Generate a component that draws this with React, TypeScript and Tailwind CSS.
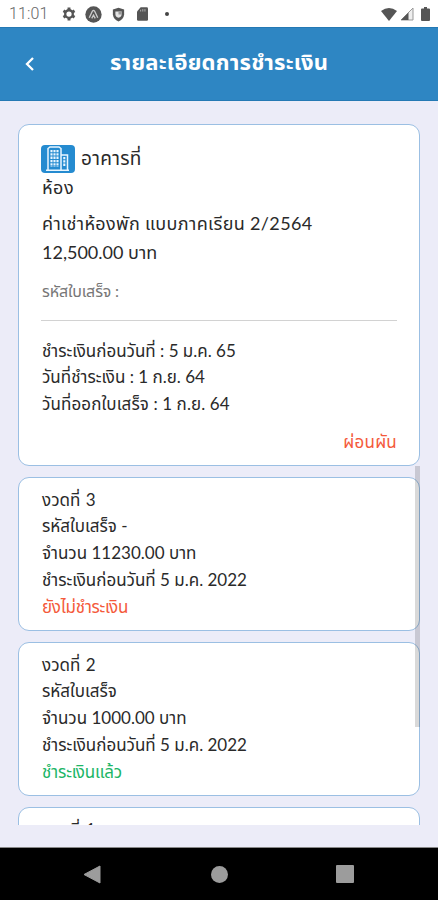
import type { ReactNode } from "react";

function Line({ children, className = "" }: { children: ReactNode; className?: string }) {
  return (
    <p className="flex h-[26.75px] items-center whitespace-nowrap">
      <span className={className}>{children}</span>
    </p>
  );
}

function StatusBar() {
  return (
    <div className="flex h-[27px] shrink-0 items-center bg-white pt-[1px] text-[#555]">
      <span className="ml-[9px] w-[53px] font-['Roboto',sans-serif] text-[16px] font-light tracking-[0.1px] text-[#666]">11:01</span>
      <svg width="14" height="14" viewBox="0 0 24 24" fill="none" stroke="currentColor">
        <circle cx="12" cy="12" r="6.5" strokeWidth="4" />
        <path d="M12 1v4M12 19v4M2.5 6.5l3.4 2M18.1 15.5l3.4 2M2.5 17.5l3.4-2M18.1 8.5l3.4-2" strokeWidth="5" />
      </svg>
      <svg className="ml-[9px]" width="17" height="17" viewBox="0 0 24 24">
        <circle cx="12" cy="12" r="11.5" fill="currentColor" />
        <path d="M6 16.5 10.3 7.5Q12 5 13.7 7.5L18 16.5M9.5 17.5l2.5-4.5 2.5 4.5" fill="none" stroke="#ccc" strokeWidth="1.9" />
      </svg>
      <svg className="ml-[10px]" width="13" height="15" viewBox="0 0 20 24">
        <path d="M10 1 1 4v8q1 8 9 11 8-3 9-11V4Z" fill="currentColor" />
        <path d="M5 7h10v4q0 5-5 6-5-1-5-6Z" fill="#e4e4e4" />
        <path d="M10 7h5v5h-5Z" fill="#999" />
      </svg>
      <svg className="ml-[12px]" width="11" height="14" viewBox="0 0 18 22">
        <path d="M6 0h10q2 0 2 2v18q0 2-2 2H2q-2 0-2-2V7Z" fill="currentColor" />
        <path d="M6 4v3M9.5 3v4M13 3v4" stroke="#bbb" strokeWidth="1.4" />
      </svg>
      <span className="ml-[17px] size-[4px] rounded-full bg-[#444]" />
      <svg className="ml-auto" width="16" height="13" viewBox="0 0 16 13">
        <path d="M0 3Q8-3 16 3L8 13Z" fill="currentColor" />
      </svg>
      <svg className="ml-[3px]" width="14" height="14" viewBox="0 0 14 14">
        <path d="M13 1v12H1Z" fill="#eee" stroke="#999" />
        <path d="M8.5 5.5V13H1Z" fill="currentColor" />
      </svg>
      <svg className="mr-[8px] ml-[7px]" width="9" height="14" viewBox="0 0 9 14">
        <path d="M3 0h3v1.5h2q1 0 1 1V13q0 1-1 1H1q-1 0-1-1V2.5q0-1 1-1h2Z" fill="currentColor" />
      </svg>
    </div>
  );
}

function Building() {
  return (
    <svg className="shrink-0" width="34" height="28" viewBox="0 0 34 28">
      <rect width="34" height="28" rx="4" fill="#258bd0" />
      <path d="M7 25V3.5L9 2h9l2 1.5V25M20 10h6.5V25M5 25.2h23" fill="none" stroke="#e9f6ff" strokeWidth="1.5" />
      <path d="M10.5 5v17M13.5 5v17M16.5 5v17M23.3 12v10" stroke="#e9f6ff" strokeWidth="2.1" strokeDasharray="2.3 1" />
    </svg>
  );
}

const card = "shrink-0 rounded-[11px] border-[1.5px] border-[#9bbfe3] bg-white pr-[22px] pl-[23px]";

export default function App() {
  return (
    <div className="flex h-[900px] w-[438px] flex-col overflow-hidden bg-[#ececf8] font-['Lato','Noto_Sans_Thai','Noto_Sans',sans-serif] text-[17px] text-[#2a2a2a]">
      <StatusBar />
      <header className="flex h-[74px] shrink-0 items-center border-y border-[#2479b4] bg-[#2e86c3] text-white">
        <svg className="ml-[24px]" width="11" height="16" viewBox="0 0 11 16" fill="none" stroke="currentColor" strokeWidth="2.3">
          <path d="M9 2 3 8l6 6" />
        </svg>
        <h1 className="ml-[75px] pb-[5px] text-[22px] font-bold tracking-[0.22px] whitespace-nowrap">รายละเอียดการชำระเงิน</h1>
      </header>
      <main className="relative mt-[23px] flex h-[701px] shrink-0 flex-col gap-[11px] overflow-hidden px-[18px]">
        <section className={card + " h-[342px]"}>
          <div className="mt-[20px] -ml-[1px] flex h-[28px] items-center gap-[6px]">
            <Building />
            <div className="pb-[2px]"><Line className="text-[19px] tracking-[0.3px]">อาคารที่</Line></div>
          </div>
          <div className="mt-[1px]"><Line className="text-[18px] tracking-[0.5px]">ห้อง</Line></div>
          <div className="mt-[9px]"><Line className="text-[18px] tracking-[0.35px]">ค่าเช่าห้องพัก แบบภาคเรียน 2/2564</Line></div>
          <div className="mt-[3px]"><Line className="text-[18px]">12,500.00 บาท</Line></div>
          <div className="mt-[11px]"><Line className="text-[16px] tracking-[-0.15px] text-[#777]">รหัสใบเสร็จ :</Line></div>
          <hr className="mt-[16px] mb-[16px] -ml-[1px] border-[#d2d2d2]" />
          <Line>ชำระเงินก่อนวันที่ : 5 ม.ค. 65</Line>
          <Line>วันที่ชำระเงิน : 1 ก.ย. 64</Line>
          <Line className="tracking-[0.1px]">วันที่ออกใบเสร็จ : 1 ก.ย. 64</Line>
          <div className="mt-[11px] flex justify-end text-[#f45a3b]"><Line className="tracking-[0.2px]">ผ่อนผัน</Line></div>
        </section>
        <section className={card + " h-[154px] pt-[8px]"}>
          <Line className="[word-spacing:1px]">งวดที่ 3</Line>
          <Line>รหัสใบเสร็จ -</Line>
          <Line>จำนวน 11230.00 บาท</Line>
          <Line>ชำระเงินก่อนวันที่ 5 ม.ค. 2022</Line>
          <Line className="tracking-[-0.3px] text-[#f45a3b]">ยังไม่ชำระเงิน</Line>
        </section>
        <section className={card + " h-[154px] pt-[8px]"}>
          <Line className="[word-spacing:1px]">งวดที่ 2</Line>
          <Line>รหัสใบเสร็จ</Line>
          <Line>จำนวน 1000.00 บาท</Line>
          <Line>ชำระเงินก่อนวันที่ 5 ม.ค. 2022</Line>
          <Line className="tracking-[-0.2px] text-[#20b566]">ชำระเงินแล้ว</Line>
        </section>
        <section className={card + " h-[154px] pt-[8px]"}>
          <Line className="[word-spacing:1px]">งวดที่ 1</Line>
        </section>
        <div className="absolute top-[342px] right-[18px] h-[261px] w-[5px] bg-black/15" />
      </main>
      <div className="mt-auto flex h-[53px] shrink-0 items-center border-t border-[#888] bg-black text-[#9c9c9c]">
        <svg className="ml-[83px]" width="18" height="19" viewBox="0 0 18 19"><path d="M17 1v17L1 9.5Z" fill="currentColor" stroke="currentColor" strokeLinejoin="round" /></svg>
        <span className="ml-[110px] size-[17px] rounded-full bg-[#9c9c9c]" />
        <span className="ml-[108px] size-[18px] rounded-[1px] bg-[#9c9c9c]" />
      </div>
    </div>
  );
}
